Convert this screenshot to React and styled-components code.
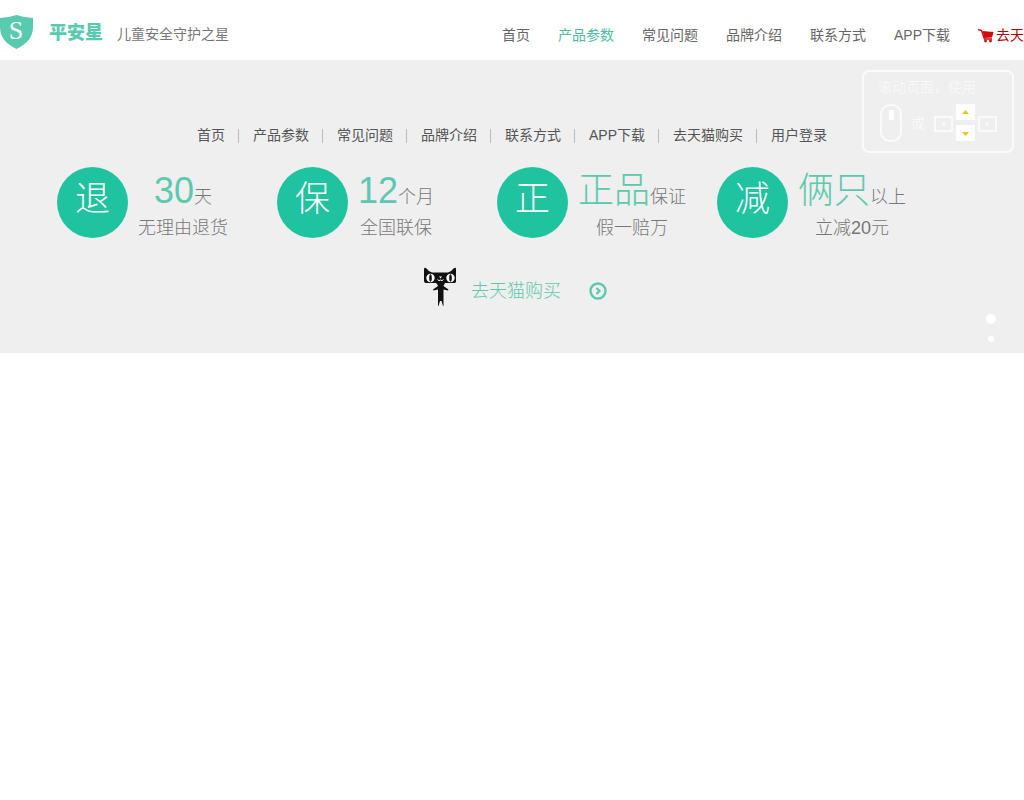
import React from "react";
import styled, { createGlobalStyle } from "styled-components";

const NAV_ITEMS = ["首页", "产品参数", "常见问题", "品牌介绍", "联系方式", "APP下载"];
const FOOTER_ITEMS = [...NAV_ITEMS, "去天猫购买", "用户登录"];
const ACTIVE_ITEM = "产品参数";

const PROMISES = [
  { badge: "退", strong: "30", unit: "天", detail: "无理由退货" },
  { badge: "保", strong: "12", unit: "个月", detail: "全国联保" },
  { badge: "正", strong: "正品", unit: "保证", detail: "假一赔万" },
  { badge: "减", strong: "俩只", unit: "以上", detail: "立减20元" },
];

const ShieldIcon = () => (
  <svg width="33" height="36" viewBox="0 0 33 36" aria-hidden="true">
    <path
      d="M0 4Q9 3.500 16.500 1Q24 3.500 33 4V13C33 23 27 30 16.500 35C6 30 0 23 0 13Z"
      fill="#58cbae"
    />
    <text
      x="16"
      y="25"
      textAnchor="middle"
      fontFamily="Liberation Serif, serif"
      fontSize="26"
      fill="#fff"
    >
      S
    </text>
  </svg>
);

const CartIcon = () => (
  <svg width="16" height="16" viewBox="0 0 16 16" aria-hidden="true">
    <path d="M0 2.500L3.500 3.500L6.500 12H14" fill="none" stroke="#d00b0b" strokeWidth="1.500" />
    <path d="M4.500 4L15.500 5L14 10.500L6.500 11Z" fill="#d00b0b" />
    <circle cx="7.500" cy="14" r="1.400" fill="#d00b0b" />
    <circle cx="12.500" cy="14" r="1.400" fill="#d00b0b" />
  </svg>
);

const CatIcon = () => (
  <svg width="34" height="40" viewBox="0 0 34 40" aria-hidden="true">
    <path
      d="M1 2Q1.500 0 3.500 1.500Q6 5 9 5.500H25Q28 5 30.500 1.500Q33 0 33 2V14.500Q33 16 31 16H3Q1 16 1 14Z"
      fill="#111"
    />
    <path
      d="M12 15H23Q21 17 20.500 19L25.500 22.500L25 23.500L20.500 22.500V31L20.500 39H20L18.500 34H17L15.500 39H15V22.500L10.500 23.500L10 22.500L15 19Q14.500 17 12 15Z"
      fill="#111"
    />
    <ellipse cx="7.500" cy="11" rx="4.200" ry="4.200" fill="#fff" />
    <ellipse cx="27.500" cy="11" rx="4.200" ry="4.200" fill="#fff" />
    <ellipse cx="7.500" cy="11" rx="1.300" ry="3.800" fill="#111" />
    <ellipse cx="27.500" cy="11" rx="1.300" ry="3.800" fill="#111" />
    <path d="M16 9.500H19L17.500 11.500Z" fill="#fff" />
    <path d="M14.500 12.500Q16 14.500 17.500 13Q19 14.500 20.500 12.500" fill="none" stroke="#fff" />
  </svg>
);

const ArrowIcon = () => (
  <svg width="18" height="18" viewBox="0 0 18 18" aria-hidden="true">
    <circle cx="9" cy="9" r="7.500" fill="none" stroke="#5cc9ae" strokeWidth="2.400" />
    <path d="M7.500 6L10.500 9L7.500 12" fill="none" stroke="#5cc9ae" strokeWidth="2.200" />
  </svg>
);

const MouseIcon = () => (
  <svg width="22" height="38" viewBox="0 0 22 38" aria-hidden="true">
    <rect x="1" y="1" width="20" height="36" rx="9" fill="none" stroke="#fbfbfb" strokeWidth="2" />
    <rect x="9" y="6" width="5" height="10" rx="1" fill="#fff" />
  </svg>
);

const KeysIcon = () => (
  <svg width="64" height="38" viewBox="0 0 64 38" aria-hidden="true">
    <rect x="1" y="13" width="17" height="14" fill="none" stroke="#fafafa" strokeWidth="2" />
    <rect x="45" y="13" width="17" height="14" fill="none" stroke="#fafafa" strokeWidth="2" />
    <path d="M11 17.500V22.500L7.500 20ZM52 17.500V22.500L55.500 20Z" fill="#fafafa" />
    <rect x="22" y="0" width="19" height="16" fill="#fff" />
    <rect x="22" y="21" width="19" height="16" fill="#fff" />
    <path d="M28 10H35L31.500 6ZM28 28H35L31.500 32Z" fill="#e5c52c" />
  </svg>
);

const App = () => {
  return (
    <>
      <GlobalStyle />
      <Header>
        <Brand href="#home">
          <ShieldIcon />
          <BrandName>平安星</BrandName>
          <Slogan>儿童安全守护之星</Slogan>
        </Brand>
        <TopNav>
          {NAV_ITEMS.map((item) => (
            <TopLink key={item} href={`#${item}`} $active={item === ACTIVE_ITEM}>
              {item}
            </TopLink>
          ))}
          <BuyLink href="#buy">
            <CartIcon />
            去天猫购买
          </BuyLink>
        </TopNav>
      </Header>
      <Panel>
        <FooterNav>
          {FOOTER_ITEMS.map((item) => (
            <FooterLink key={item} href={`#${item}`}>
              {item}
            </FooterLink>
          ))}
        </FooterNav>
        <Promises>
          {PROMISES.map(({ badge, strong, unit, detail }) => (
            <Promise key={badge}>
              <Badge>{badge}</Badge>
              <PromiseText>
                <Headline>
                  <Strong>{strong}</Strong>
                  {unit}
                </Headline>
                <Detail>{detail}</Detail>
              </PromiseText>
            </Promise>
          ))}
        </Promises>
        <Store href="#tmall">
          <CatIcon />
          <StoreLabel>
            去天猫购买
            <ArrowIcon />
          </StoreLabel>
        </Store>
        <ScrollHint>
          <HintText>滚动页面，使用</HintText>
          <HintRow>
            <MouseIcon />
            <HintText>或</HintText>
            <KeysIcon />
          </HintRow>
        </ScrollHint>
        <Pager>
          <Dot type="button" aria-label="1" $size={10} />
          <Dot type="button" aria-label="2" $size={6} />
        </Pager>
      </Panel>
    </>
  );
};

const GlobalStyle = createGlobalStyle`
  * {
    box-sizing: border-box;
  }

  body {
    margin: 0;
    background: #fff;
    color: #555;
    font-family: "Liberation Sans", "Noto Sans CJK SC", sans-serif;
    font-size: 14px;
    font-weight: 300;
    line-height: 20px;
  }

  a {
    color: inherit;
    text-decoration: none;
  }

  p {
    margin: 0;
  }
`;

const Header = styled.header`
  display: flex;
  height: 60px;
  overflow: hidden;
  white-space: nowrap;
`;

const Brand = styled.a`
  display: flex;
  flex: 0 0 488px;
  align-items: center;
  padding-top: 4px;
`;

const BrandName = styled.span`
  margin-left: 16px;
  padding-top: 2px;
  color: #58cbae;
  font-size: 18px;
  font-weight: 900;
`;

const Slogan = styled.span`
  margin-left: 14px;
  padding-top: 4px;
  color: #777;
  font-weight: 400;
`;

const TopNav = styled.nav`
  display: flex;
  flex: none;
  align-items: center;
  padding-top: 10px;
`;

const TopLink = styled.a`
  padding: 0 14px;
  color: ${(props) => (props.$active ? "#4dbb9f" : "#666")};
  font-weight: 400;
`;

const BuyLink = styled.a`
  display: flex;
  align-items: center;
  gap: 2px;
  padding: 0 14px;
  color: #b00000;
  font-weight: 400;
`;

const Panel = styled.main`
  position: relative;
  padding: 65px 0 46px;
  background: #efefef;
`;

const FooterNav = styled.nav`
  display: flex;
  justify-content: center;
  color: #555;
  font-weight: 400;
`;

const FooterLink = styled.a`
  display: flex;
  padding-left: 14px;

  &:not(:last-child)::after {
    content: "";
    width: 1px;
    height: 14px;
    margin: 4px 0 0 13px;
    background: #bbb;
  }

  &:last-child {
    padding-right: 14px;
  }
`;

const Promises = styled.section`
  display: grid;
  grid-template-columns: repeat(4, 220px);
  justify-content: center;
  margin-top: 22px;
  padding-right: 30px;
`;

const Promise = styled.article`
  display: flex;
  gap: 10px;
  white-space: nowrap;
`;

const Badge = styled.span`
  flex: none;
  width: 71px;
  height: 71px;
  border-radius: 50%;
  background: #1fc3a0;
  color: #fff;
  font-size: 35px;
  line-height: 64px;
  text-align: center;
`;

const PromiseText = styled.div`
  color: #777;
  font-size: 18px;
  text-align: center;
`;

const Headline = styled.p`
  height: 48px;
  line-height: 48px;
`;

const Strong = styled.span`
  color: #5cc9ae;
  font-size: 36px;
`;

const Detail = styled.p`
  line-height: 26px;
`;

const Store = styled.a`
  display: flex;
  justify-content: center;
  gap: 14px;
  margin-top: 26px;
  padding-left: 6px;
  color: #5cc9ae;
  font-size: 18px;
`;

const StoreLabel = styled.span`
  display: flex;
  align-items: center;
  gap: 28px;
  padding-top: 8px;
`;

const ScrollHint = styled.aside`
  position: absolute;
  top: 10px;
  right: 10px;
  width: 152px;
  height: 83px;
  padding: 5px 14px;
  border: 2px solid #fbfbfb;
  border-radius: 7px;
`;

const HintText = styled.span`
  color: #fbfbfb;
`;

const HintRow = styled.div`
  display: flex;
  align-items: center;
  justify-content: space-between;
  margin-top: 7px;
  padding-left: 2px;
`;

const Pager = styled.div`
  position: absolute;
  right: 28px;
  bottom: 11px;
  display: flex;
  flex-direction: column;
  align-items: center;
  gap: 12px;
`;

const Dot = styled.button`
  width: ${(props) => props.$size}px;
  height: ${(props) => props.$size}px;
  padding: 0;
  border: 0;
  border-radius: 50%;
  background: #fff;
  cursor: pointer;
`;

export default App;
